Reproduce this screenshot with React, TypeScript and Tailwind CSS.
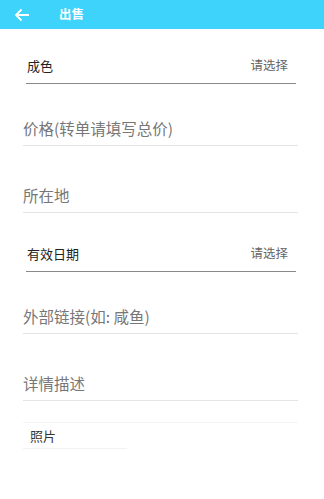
const font = { fontFamily: '"Noto Sans CJK SC", "Roboto", sans-serif' };

function SelectRow({ label }: { label: string }) {
  return (
    <div className="ml-[26px] mr-[28px] flex h-[36px] items-center justify-between border-b border-[#8a8a8a] pl-[1px] pr-[8px]">
      <span className="text-[13px] text-[#222]">{label}</span>
      <span className="text-[12.5px] text-[#666]">请选择</span>
    </div>
  );
}

function InputRow({ placeholder }: { placeholder: string }) {
  return (
    <div className="ml-[23px] mr-[26px] flex h-[40px] items-end border-b border-[#e4e4e4] pb-[7px]">
      <span className="text-[15.5px] leading-[20px] text-[#777]">{placeholder}</span>
    </div>
  );
}

export default function App() {
  return (
    <div className="min-h-[499px] w-[324px] bg-white" style={font}>
      <header className="flex h-[29px] items-center bg-[#3dd3fb] text-white">
        <svg
          className="ml-[14px] h-[14px] w-[16px]"
          viewBox="0 0 16 14"
          fill="none"
          stroke="white"
          strokeWidth="1.8"
        >
          <path d="M15 7H2M7.5 1.5 2 7l5.5 5.5" />
        </svg>
        <span className="ml-[29px] text-[12.5px] font-bold">出售</span>
      </header>

      <div className="pt-[19px]">
        <SelectRow label="成色" />
      </div>
      <div className="pt-[22px]">
        <InputRow placeholder="价格(转单请填写总价)" />
      </div>
      <div className="pt-[27px]">
        <InputRow placeholder="所在地" />
      </div>
      <div className="pt-[23px]">
        <SelectRow label="有效日期" />
      </div>
      <div className="pt-[22px]">
        <InputRow placeholder="外部链接(如: 咸鱼)" />
      </div>
      <div className="pt-[27px]">
        <InputRow placeholder="详情描述" />
      </div>

      <div className="ml-[23px] mr-[26px] mt-[21px] border-t border-[#f4f4f4]">
        <div className="flex h-[26px] w-[104px] items-center border-b border-[#f2f2f2] pl-[7px]">
          <span className="text-[13px] text-[#333]">照片</span>
        </div>
      </div>
    </div>
  );
}
